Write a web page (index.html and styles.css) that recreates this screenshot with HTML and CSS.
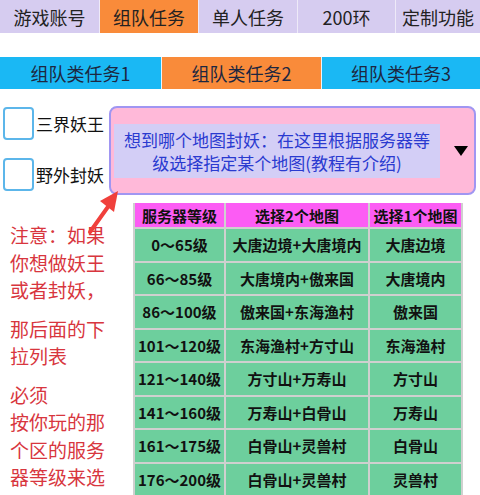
FILE: index.html
```html
<!DOCTYPE html>
<html lang="zh">
<head>
<meta charset="UTF-8">
<meta name="viewport" content="width=device-width, initial-scale=1.0">
<title>组队任务</title>
<link rel="stylesheet" href="styles.css">
</head>
<body>
    <div class="page">
        <!-- Top tabs -->
        <div class="tabs">
            <div class="tab t1">游戏账号</div>
            <div class="tab t2 active">组队任务</div>
            <div class="tab t3">单人任务</div>
            <div class="tab t4">200环</div>
            <div class="tab t5">定制功能</div>
        </div>

        <!-- Sub tabs -->
        <div class="subtabs">
            <div class="subtab s1">组队类任务1</div>
            <div class="subtab s2 active">组队类任务2</div>
            <div class="subtab s3">组队类任务3</div>
        </div>

        <!-- Options + dropdown -->
        <div class="options">
            <div class="checks">
                <label class="check"><span class="box"></span>三界妖王</label>
                <label class="check"><span class="box"></span>野外封妖</label>
            </div>
            <div class="select">
                <div class="select-text">想到哪个地图封妖：在这里根据服务器等级选择指定某个地图(教程有介绍)</div>
                <span class="caret"></span>
            </div>
        </div>

        <!-- Notes + level table -->
        <div class="lower">
            <div class="notes">
                <p>注意：如果<br>你想做妖王<br>或者封妖，</p>
                <p>那后面的下<br>拉列表</p>
                <p>必须<br>按你玩的那<br>个区的服务<br>器等级来选</p>
            </div>
            <table class="levels">
                <tr><th>服务器等级</th><th>选择2个地图</th><th>选择1个地图</th></tr>
                <tr><td>0～65级</td><td>大唐边境+大唐境内</td><td>大唐边境</td></tr>
                <tr><td>66～85级</td><td>大唐境内+傲来国</td><td>大唐境内</td></tr>
                <tr><td>86～100级</td><td>傲来国+东海渔村</td><td>傲来国</td></tr>
                <tr><td>101～120级</td><td>东海渔村+方寸山</td><td>东海渔村</td></tr>
                <tr><td>121～140级</td><td>方寸山+万寿山</td><td>方寸山</td></tr>
                <tr><td>141～160级</td><td>万寿山+白骨山</td><td>万寿山</td></tr>
                <tr><td>161～175级</td><td>白骨山+灵兽村</td><td>白骨山</td></tr>
                <tr><td>176～200级</td><td>白骨山+灵兽村</td><td>灵兽村</td></tr>
            </table>
        </div>

        <!-- red pointer arrow -->
        <svg class="arrow" width="40" height="50" viewBox="0 0 40 50">
            <line x1="6" y1="44" x2="26" y2="16" stroke="#f0403c" stroke-width="4" stroke-linecap="round"/>
            <polygon points="34,3 16,13 30,24" fill="#f0403c"/>
        </svg>
    </div>
</body>
</html>
```

FILE: styles.css
```css
/* Basic page */
body, html {
    margin: 0;
    background: #fff;
    font-family: "Noto Sans CJK SC", "Noto Sans", sans-serif;
}

.page {
    position: relative;
    width: 480px;
    height: 495px;
    overflow: hidden;
}

/* Top tabs */
.tabs {
    display: flex;
    height: 33px;
    gap: 1px;
    background: #eeeaf8;
}

.tab {
    background: #d6ccf0;
    color: #222;
    font-size: 18px;
    display: flex;
    align-items: center;
    justify-content: center;
}

.t1 { width: 99px; }
.t2 { width: 98px; }
.t3 { width: 98px; }
.t4 { width: 97px; }
.t5 { flex-grow: 1; }

.tab.active {
    background: #f98b3a;
}

/* Sub tabs */
.subtabs {
    display: flex;
    height: 32px;
    margin-top: 24px;
    gap: 1px;
    background: #e8f6fd;
}

.subtab {
    background: #1ab8f4;
    color: #1d2740;
    font-size: 18px;
    display: flex;
    align-items: center;
    justify-content: center;
}

.s1 { width: 161px; }
.s2 { width: 159px; }
.s3 { flex-grow: 1; }

.subtab.active {
    background: #f98b3a;
}

/* Checkboxes and dropdown */
.options {
    display: flex;
    margin-top: 17px;
}

.checks {
    width: 109px;
    display: flex;
    flex-direction: column;
    gap: 18px;
    padding-top: 1px;
}

.check {
    display: flex;
    align-items: center;
    font-size: 17px;
    color: #111;
    height: 33px;
}

.box {
    width: 27px;
    height: 29px;
    border: 2px solid #5cb6ea;
    border-radius: 4px;
    margin: 0 2px 0 3px;
}

.select {
    width: 363px;
    height: 85px;
    border: 2px solid #a096f2;
    border-radius: 8px;
    background: #ffb9d9;
    display: flex;
    align-items: center;
}

.select-text {
    width: 316px;
    margin-left: 3px;
    padding: 4px 5px;
    background: #d3cef6;
    color: #2a3ad0;
    font-size: 17px;
    line-height: 23px;
    text-align: center;
}

.caret {
    margin-left: 14px;
    width: 0;
    height: 0;
    border-left: 7px solid transparent;
    border-right: 7px solid transparent;
    border-top: 10px solid #000;
}

/* Lower area */
.lower {
    display: flex;
    align-items: flex-start;
    margin-top: 8px;
}

.notes {
    width: 123px;
    padding: 18px 0 0 10px;
    color: #d8363e;
    font-size: 19px;
    line-height: 27.5px;
}

.notes p {
    margin: 0 0 11px 0;
}

.levels {
    border-collapse: collapse;
    width: 330px;
    font-size: 15px;
    font-weight: bold;
    color: #111;
}

.levels th,
.levels td {
    border: 2px solid #cfd0cf;
    text-align: center;
    padding: 0;
}

.levels th {
    background: #fc5cf4;
    height: 24px;
    font-weight: bold;
}

.levels td {
    background: #6dcf9d;
    height: 31.5px;
}

.levels tr > :first-child { width: 89px; }
.levels tr > :nth-child(2) { width: 142px; }

.levels tr:first-child th {
    border-top: none;
}

/* Arrow over the gap */
.arrow {
    position: absolute;
    left: 84px;
    top: 188px;
}
```
